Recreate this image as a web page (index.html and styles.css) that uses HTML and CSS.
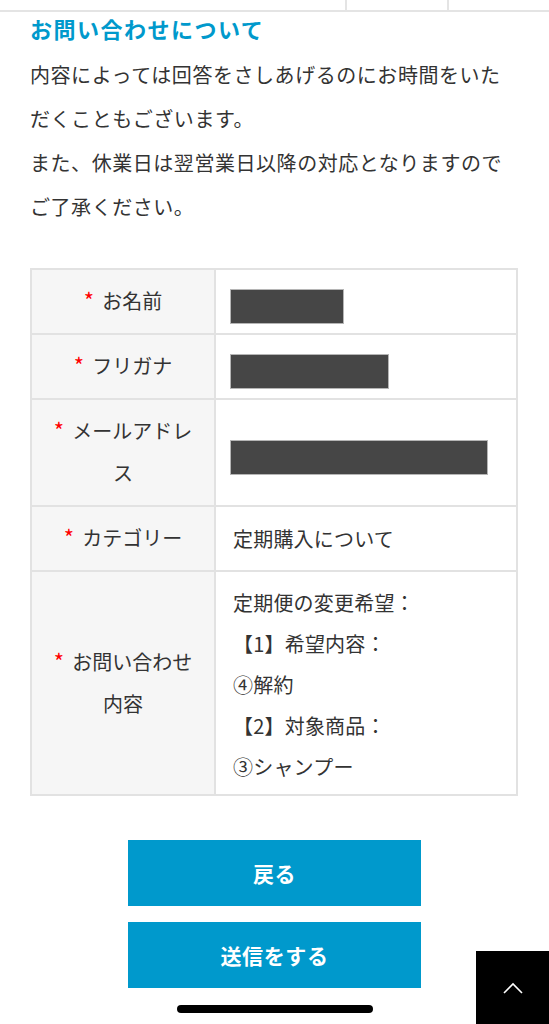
FILE: index.html
```html
<!DOCTYPE html>
<html lang="ja">
<head>
<meta charset="utf-8">
<title>お問い合わせ確認</title>
<link rel="stylesheet" href="styles.css">
</head>
<body>
<div class="tabs">
  <div class="tab tab-a"></div>
  <div class="tab tab-b"></div>
  <div class="tab tab-c"></div>
</div>
<main class="content">
  <h2 class="title">お問い合わせについて</h2>
  <p class="lead">内容によっては回答をさしあげるのにお時間をいただくこともございます。<br>また、休業日は翌営業日以降の対応となりますのでご了承ください。</p>

  <table class="confirm">
    <colgroup><col class="col-label"><col></colgroup>
    <tbody>
      <tr>
        <th><span class="req">*</span>お名前</th>
        <td><div class="mask mask-1"></div></td>
      </tr>
      <tr>
        <th><span class="req">*</span>フリガナ</th>
        <td><div class="mask mask-2"></div></td>
      </tr>
      <tr>
        <th><span class="req">*</span>メールアドレス</th>
        <td><div class="mask mask-3"></div></td>
      </tr>
      <tr>
        <th><span class="req">*</span>カテゴリー</th>
        <td>定期購入について</td>
      </tr>
      <tr>
        <th><span class="req">*</span>お問い合わせ内容</th>
        <td class="multi">定期便の変更希望：<br>【1】希望内容：<br>④解約<br>【2】対象商品：<br>③シャンプー</td>
      </tr>
    </tbody>
  </table>

  <div class="actions">
    <button class="btn" type="button">戻る</button>
    <button class="btn" type="button">送信をする</button>
  </div>
</main>

<a class="to-top" href="#" aria-label="ページトップへ">
  <svg width="20" height="12" viewBox="0 0 20 12"><path d="M1 11 L10 2 L19 11" fill="none" stroke="#fff" stroke-width="1.6"/></svg>
</a>
<div class="home-indicator"></div>
</body>
</html>
```

FILE: styles.css
```css
* { box-sizing: border-box; }

html, body {
  margin: 0;
  padding: 0;
  background: #fff;
}

body {
  font-family: "Noto Sans CJK JP", "Noto Sans", sans-serif;
  color: #333;
  width: 549px;
  min-height: 1024px;
}

.tabs {
  display: flex;
  height: 12px;
  border-bottom: 2px solid #e4e4e4;
}

.tab { height: 10px; }
.tab-a { width: 347px; border-right: 2px solid #e4e4e4; }
.tab-b { width: 102px; border-right: 2px solid #e4e4e4; }
.tab-c { flex: 1; }

.content {
  padding: 0 31px 0 30px;
}

.title {
  margin: 0;
  font-size: 22px;
  line-height: 32px;
  font-weight: 700;
  letter-spacing: 1.5px;
  color: #0099cc;
}

.lead {
  margin: 9px 0 0;
  padding-right: 10px;
  font-size: 20px;
  line-height: 44px;
  letter-spacing: 0.55px;
  color: #333;
}

.confirm {
  margin-top: 39px;
  width: 488px;
  table-layout: fixed;
  border-collapse: separate;
  border-spacing: 0;
  border-top: 2px solid #e2e2e2;
  border-left: 2px solid #e2e2e2;
}

.col-label { width: 184px; }

.confirm th,
.confirm td {
  border-right: 2px solid #e2e2e2;
  border-bottom: 2px solid #e2e2e2;
  vertical-align: middle;
  font-size: 20px;
  color: #333;
}

.confirm th {
  background: #f6f6f6;
  font-weight: 400;
  text-align: center;
  line-height: 42px;
  padding: 10px 14px 11px;
}

.confirm td {
  background: #fff;
  text-align: left;
  line-height: 41px;
  padding: 9px 15px 9px 17px;
  letter-spacing: 0.2px;
}

.confirm td.multi {
  padding-top: 10px;
  padding-bottom: 7px;
}

.req {
  color: #ff0000;
  font-size: 22px;
  line-height: 0;
  margin-right: 8px;
}

.mask {
  height: 35px;
  margin-top: 10px;
  margin-left: -3px;
  background: #464646;
  border: 1px solid #b5b5b5;
}

.mask-1 { width: 114px; }
.mask-2 { width: 159px; }
.mask-3 { width: 258px; }

.actions {
  margin-top: 44px;
  display: flex;
  flex-direction: column;
  align-items: center;
  gap: 16px;
  padding-bottom: 37px;
}

.btn {
  width: 293px;
  height: 66px;
  border: 0;
  background: #0099cc;
  color: #fff;
  font-family: "Noto Sans CJK JP", "Noto Sans", sans-serif;
  font-size: 21px;
  font-weight: 700;
  letter-spacing: 0.6px;
  cursor: pointer;
  margin-left: 1px;
}

.to-top {
  position: fixed;
  right: 0;
  bottom: 0;
  width: 73px;
  height: 73px;
  background: #000;
  display: flex;
  align-items: center;
  justify-content: center;
}

.home-indicator {
  position: fixed;
  left: 177px;
  bottom: 11px;
  width: 196px;
  height: 8px;
  border-radius: 4px;
  background: #000;
}
```
